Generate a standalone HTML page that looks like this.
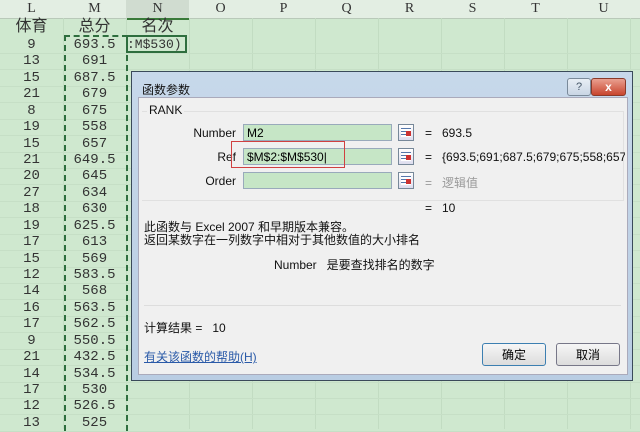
<!DOCTYPE html>
<html><head><meta charset="utf-8"><style>
body{margin:0;width:640px;height:429px;overflow:hidden;background:#cfe8cf;font-family:"Liberation Sans","Noto Sans CJK SC",sans-serif;position:relative}
.a{position:absolute}
.hdr{position:absolute;top:0;height:18px;width:63px;background:#e3eee3;border-right:1px solid #c8d6c8;border-bottom:1px solid #b9c9b9;text-align:center;font:14px/18px "Liberation Serif","Noto Serif CJK SC",serif;color:#333}
.vl{position:absolute;top:18px;width:1px;height:411px;background:#c2dcc2}
.hl{position:absolute;left:0;width:640px;height:1px;background:#c6dfc6}
.c{position:absolute;width:63px;text-align:center;font:14px/16px "Liberation Mono","Noto Sans CJK SC",monospace;color:#333}
.dlg{position:absolute;left:131px;top:71px;width:500px;height:308px;border:1px solid #3a4a5a;background:linear-gradient(#c7d8ea,#b9cde3);}
.in{position:absolute;left:138px;top:97px;width:488px;height:276px;background:#f0f0f0;border:1px solid #aab}
.t{position:absolute;font-size:12px;color:#111;white-space:nowrap}
.box{position:absolute;left:243px;width:149px;height:17px;background:#c6e6c6;border:1px solid #9ab;font-size:12px;line-height:17px;padding-left:3px;box-sizing:border-box}
.ib{position:absolute;left:398px;width:16px;height:17px;border:1px solid #789;background:linear-gradient(#fff,#dde);box-sizing:border-box}
.ib:after{content:"";position:absolute;left:2px;top:3px;width:10px;height:9px;background:repeating-linear-gradient(#57a 0 1px,#fff 1px 3px)}
.ib:before{content:"";position:absolute;left:7px;top:6px;width:5px;height:5px;background:#c33;z-index:1}
.btn{position:absolute;top:343px;width:64px;height:23px;border:1px solid #778;border-radius:3px;background:linear-gradient(#f6f6f6,#dcdcdc);text-align:center;font-size:12px;line-height:23px;box-sizing:border-box}
</style></head><body>
<div class="hdr" style="left:0">L</div><div class="hdr" style="left:63px">M</div><div class="hdr" style="left:126px;background:#d0dcd0;border-bottom:2px solid #3a7a3a">N</div><div class="hdr" style="left:189px">O</div><div class="hdr" style="left:252px">P</div><div class="hdr" style="left:315px">Q</div><div class="hdr" style="left:378px">R</div><div class="hdr" style="left:441px">S</div><div class="hdr" style="left:504px">T</div><div class="hdr" style="left:567px;width:73px">U</div>
<div class="vl" style="left:63px"></div><div class="vl" style="left:126px"></div><div class="vl" style="left:189px"></div><div class="vl" style="left:252px"></div><div class="vl" style="left:315px"></div><div class="vl" style="left:378px"></div><div class="vl" style="left:441px"></div><div class="vl" style="left:504px"></div><div class="vl" style="left:567px"></div><div class="vl" style="left:630px"></div>
<div id="rows"></div>
<div class="c" style="left:0;top:18px;font-size:16px;line-height:18px">体育</div>
<div class="c" style="left:63px;top:18px;font-size:16px;line-height:18px">总分</div>
<div class="c" style="left:126px;top:18px;font-size:16px;line-height:18px">名次</div>
<div class="a" style="left:64px;top:35px;width:60px;height:394px;border:2px dashed #2e6e3e;border-bottom:none"></div>
<div class="a" style="left:126px;top:35px;width:61px;height:18px;border:2px solid #2e6e3e;box-sizing:border-box"></div>
<div class="c" style="left:126px;top:37px;text-align:left;padding-left:1px;font-size:13px">:M$530)</div>
<script>
var d=[[9,"693.5"],[13,691],[15,"687.5"],[21,679],[8,675],[19,558],[15,657],[21,"649.5"],[20,645],[27,634],[18,630],[19,"625.5"],[17,613],[15,569],[12,"583.5"],[14,568],[16,"563.5"],[17,"562.5"],[9,"550.5"],[21,"432.5"],[14,"534.5"],[17,530],[12,"526.5"],[13,525]];
var h="";for(var i=0;i<d.length;i++){var y=37+i*16.43;h+='<div class="c" style="left:0;top:'+y+'px">'+d[i][0]+'</div><div class="c" style="left:63px;top:'+y+'px">'+d[i][1]+'</div><div class="hl" style="top:'+(y+16)+'px"></div>';}
document.getElementById("rows").innerHTML=h;
</script>
<div class="dlg">
<div class="t" style="left:10px;top:9px;font-size:12px">函数参数</div>
<div class="a" style="left:435px;top:6px;width:22px;height:16px;border:1px solid #7a8a9a;border-radius:3px;background:linear-gradient(#e8eef5,#c9d6e5);text-align:center;font-size:11px;line-height:16px;color:#456">?</div>
<div class="a" style="left:459px;top:6px;width:33px;height:16px;border:1px solid #8a3a2a;border-radius:3px;background:linear-gradient(#e9a090,#c8452e);text-align:center;font-size:12px;line-height:16px;color:#fff;font-weight:bold">x</div>
</div>
<div class="in"></div>
<div class="a" style="left:142px;top:111px;width:481px;height:89px;border:1px solid #e0e0e0;border-left:none;border-bottom:none"></div>
<div class="a" style="left:142px;top:200px;width:482px;height:1px;background:#e0e0e0"></div>
<div class="t" style="left:147px;top:103px;background:#f0f0f0;padding:0 2px">RANK</div>
<div class="t" style="left:186px;top:126px;width:50px;text-align:right">Number</div>
<div class="t" style="left:186px;top:150px;width:50px;text-align:right">Ref</div>
<div class="t" style="left:186px;top:174px;width:50px;text-align:right">Order</div>
<div class="box" style="top:124px">M2</div>
<div class="box" style="top:148px">$M$2:$M$530|</div>
<div class="box" style="top:172px"></div>
<div class="a" style="left:231px;top:141px;width:112px;height:25px;border:1px solid #d04040"></div>
<div class="ib" style="top:124px"></div><div class="ib" style="top:148px"></div><div class="ib" style="top:172px"></div>
<div class="t" style="left:425px;top:126px">=&nbsp;&nbsp;&nbsp;693.5</div>
<div class="t" style="left:425px;top:150px;width:200px;overflow:hidden">=&nbsp;&nbsp;&nbsp;{693.5;691;687.5;679;675;558;657;6</div>
<div class="t" style="left:425px;top:174px;color:#999">=&nbsp;&nbsp;&nbsp;逻辑值</div>
<div class="t" style="left:425px;top:201px">=&nbsp;&nbsp;&nbsp;10</div>
<div class="t" style="left:144px;top:218px">此函数与 Excel 2007 和早期版本兼容。</div>
<div class="t" style="left:144px;top:231px">返回某数字在一列数字中相对于其他数值的大小排名</div>
<div class="t" style="left:274px;top:256px">Number&nbsp;&nbsp;&nbsp;是要查找排名的数字</div>
<div class="a" style="left:144px;top:305px;width:477px;height:1px;background:#ddd"></div>
<div class="t" style="left:144px;top:319px">计算结果 =&nbsp;&nbsp;&nbsp;10</div>
<div class="t" style="left:144px;top:348px;color:#2a5aa8;text-decoration:underline">有关该函数的帮助(H)</div>
<div class="btn" style="left:482px;border-color:#3c7fb1">确定</div>
<div class="btn" style="left:556px">取消</div>
</body></html>
